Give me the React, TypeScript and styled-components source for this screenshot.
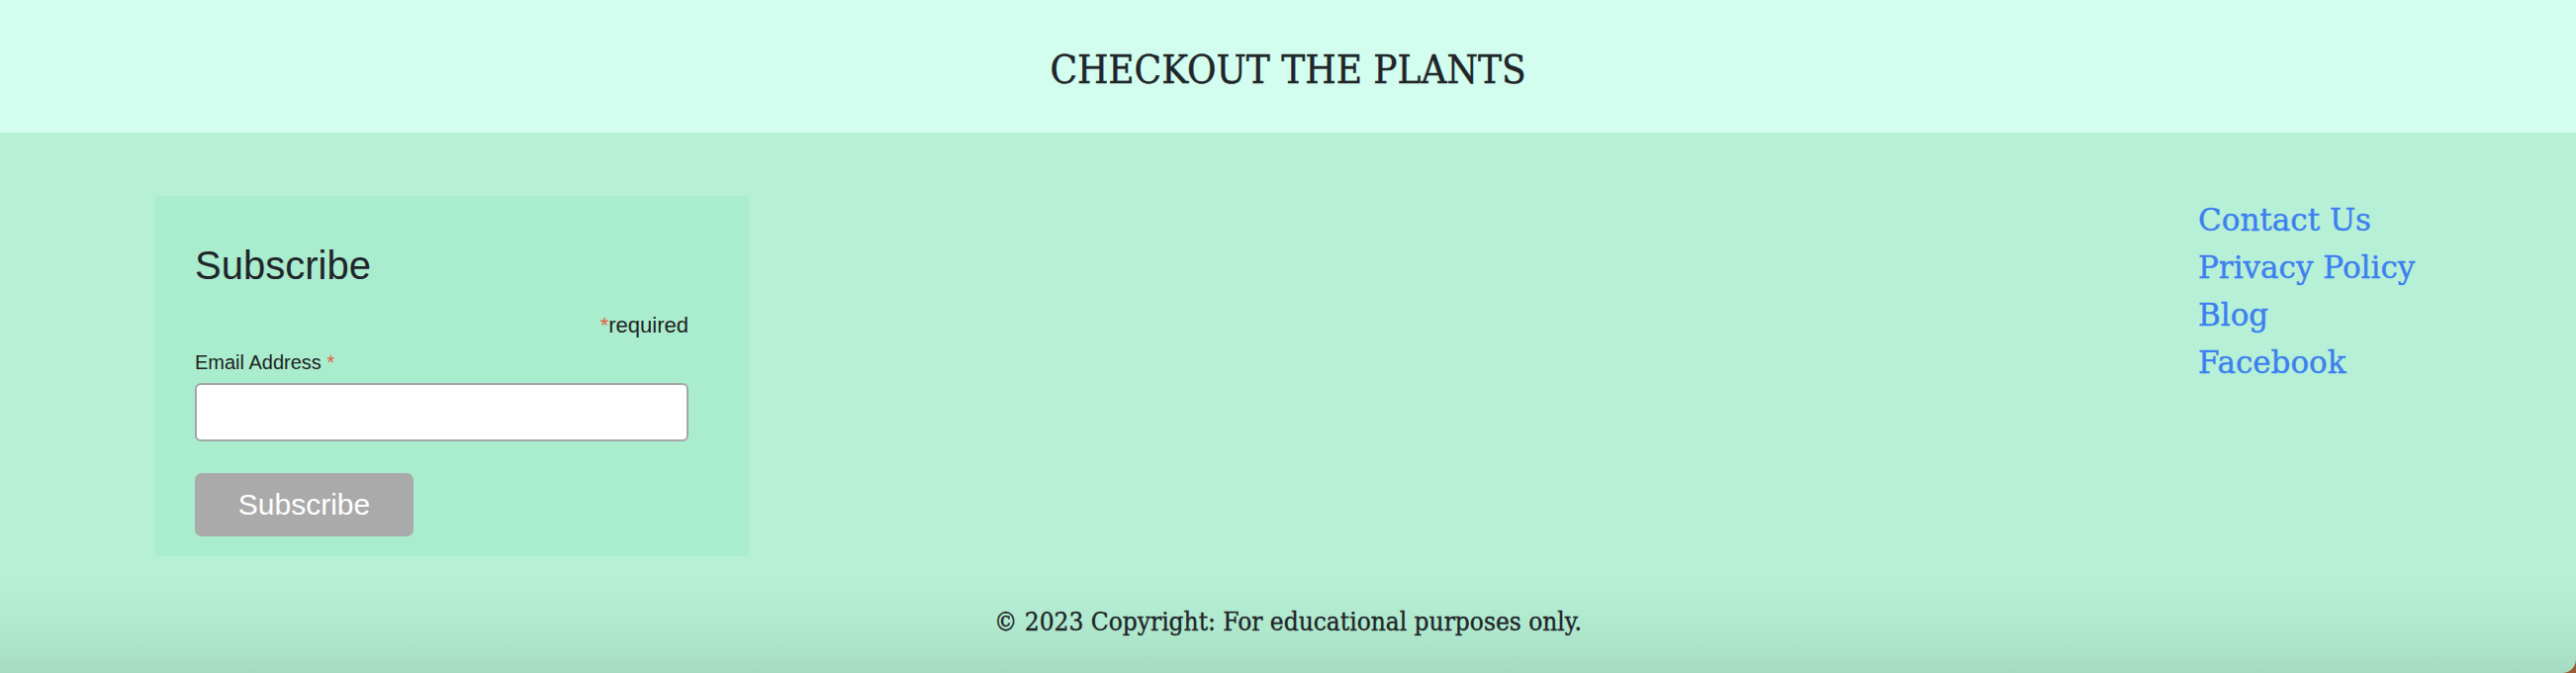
import React from 'react';
import styled, { createGlobalStyle } from 'styled-components';

const GlobalStyle = createGlobalStyle`
  html, body {
    margin: 0;
    padding: 0;
    background: #9a5a35;
  }
  * {
    box-sizing: border-box;
  }
`;

const slab = `"DejaVu Serif", "Liberation Serif", serif`;
const sans = `"Liberation Sans", Arial, Helvetica, sans-serif`;

const Page = styled.div`
  width: 2604px;
  height: 680px;
  display: flex;
  flex-direction: column;
  overflow: hidden;
  border-bottom-right-radius: 14px;
  font-family: ${slab};
  font-stretch: condensed;
  color: #212529;
`;

const Header = styled.header`
  height: 134px;
  flex: none;
  background: #d2fdef;
  display: flex;
  align-items: center;
  justify-content: center;
  h1 {
    margin: 0;
    font-size: 40px;
    font-weight: 400;
    line-height: 1.2;
    padding-top: 6px;
    -webkit-text-stroke: 0.45px #212529;
  }
`;

const Footer = styled.footer`
  flex: 1;
  display: flex;
  flex-direction: column;
  background: linear-gradient(
    to bottom,
    #b6f0d6 0%,
    #b6f0d6 82%,
    #afe8cd 92%,
    #a5dbc3 100%
  );
`;

const FooterRow = styled.div`
  display: flex;
  align-items: flex-start;
  justify-content: space-between;
  padding: 64px 167px 0 157px;
`;

const FormBox = styled.div`
  width: 600px;
  height: 364px;
  background: #a9ecce;
  padding: 47px 40px 20px 40px;
  font-family: ${sans};
  font-stretch: normal;
  color: #222;
`;

const FormTitle = styled.h2`
  margin: 0;
  font-size: 40px;
  line-height: 46px;
  font-weight: 400;
  color: #212529;
`;

const Fields = styled.div`
  width: 499px;
`;

const Required = styled.div`
  margin-top: 25px;
  text-align: right;
  font-size: 22px;
  line-height: 26px;
`;

const Asterisk = styled.span`
  color: #e85c41;
`;

const Label = styled.label`
  display: block;
  margin-top: 13px;
  font-size: 20px;
  line-height: 23px;
`;

const Input = styled.input`
  display: block;
  width: 100%;
  height: 59px;
  margin-top: 9px;
  border: 2px solid #a4a6a9;
  border-radius: 6px;
  background: #fff;
  font-size: 20px;
  padding: 0 10px;
  outline: none;
`;

const Button = styled.button`
  display: block;
  width: 221px;
  height: 64px;
  margin-top: 32px;
  border: none;
  border-radius: 7px;
  background: #aaaaaa;
  color: #fff;
  font-family: ${sans};
  font-size: 30px;
  line-height: 64px;
  padding: 0;
  cursor: pointer;
`;

const Links = styled.ul`
  list-style: none;
  margin: 0;
  padding: 0;
  width: 215px;
`;

const LinkItem = styled.li`
  font-size: 31px;
  line-height: 48px;
  font-stretch: normal;
  a {
    color: #3d7ff0;
    text-decoration: none;
    white-space: nowrap;
    -webkit-text-stroke: 0.4px #3d7ff0;
  }
`;

const Copyright = styled.p`
  margin: 47px 0 0 0;
  text-align: center;
  font-size: 26px;
  line-height: 39px;
  color: #212529;
  -webkit-text-stroke: 0.35px #212529;
`;

const links = ['Contact Us', 'Privacy Policy', 'Blog', 'Facebook'];

export default function App() {
  return (
    <>
      <GlobalStyle />
      <Page>
        <Header>
          <h1>CHECKOUT THE PLANTS</h1>
        </Header>
        <Footer>
          <FooterRow>
            <FormBox>
              <FormTitle>Subscribe</FormTitle>
              <Fields>
                <Required>
                  <Asterisk>*</Asterisk>required
                </Required>
                <Label htmlFor="mce-EMAIL">
                  Email Address <Asterisk>*</Asterisk>
                </Label>
                <Input id="mce-EMAIL" type="email" />
                <Button type="button">Subscribe</Button>
              </Fields>
            </FormBox>
            <Links>
              {links.map((l) => (
                <LinkItem key={l}>
                  <a href="#">{l}</a>
                </LinkItem>
              ))}
            </Links>
          </FooterRow>
          <Copyright>© 2023 Copyright: For educational purposes only.</Copyright>
        </Footer>
      </Page>
    </>
  );
}
